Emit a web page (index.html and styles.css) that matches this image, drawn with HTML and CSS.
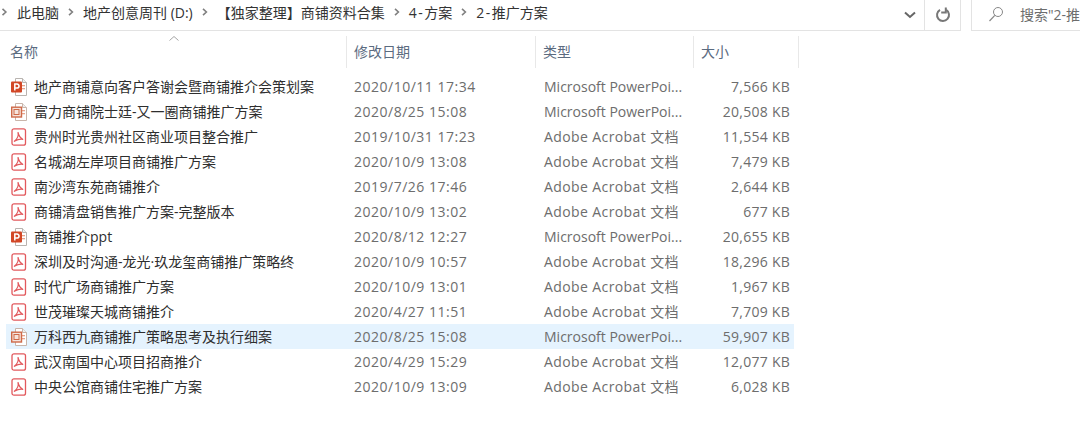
FILE: index.html
```html
<!DOCTYPE html>
<html lang="zh">
<head>
<meta charset="utf-8">
<title>2-推广方案</title>
<link rel="stylesheet" href="styles.css">
</head>
<body>
<svg class="defs" width="0" height="0" aria-hidden="true">
  <symbol id="ppt" viewBox="0 0 16 18">
    <path d="M4.500.5h7l4 4v13h-11z" fill="#fff" stroke="#b9b4b0"/>
    <path d="M11.500.5v4h4" fill="#eee" stroke="#b9b4b0"/>
    <rect x="11" y="7" width="3" height="1.300" fill="#e8a48c"/>
    <rect x="11" y="10" width="3" height="1.300" fill="#e8a48c"/>
    <rect x="0" y="3.500" width="11" height="11" rx="1" fill="#d24726"/>
    <path d="M3.800 12.500V6h2.200a2 2 0 0 1 0 4.100H3.800" fill="none" stroke="#fff" stroke-width="1.500"/>
  </symbol>
  <symbol id="pptl" viewBox="0 0 16 18">
    <path d="M4.500.5h7l4 4v13h-11z" fill="#fff" stroke="#c9b5aa"/>
    <path d="M11.500.5v4h4" fill="#eee" stroke="#c9b5aa"/>
    <rect x="11" y="7" width="3" height="1.300" fill="#e8a48c"/>
    <rect x="11" y="10" width="3" height="1.300" fill="#e8a48c"/>
    <rect x=".7" y="4.200" width="9.800" height="9.800" fill="#f6e4dc" stroke="#cf6a49" stroke-width="1.400"/>
    <rect x="3" y="6.500" width="5" height="5" fill="none" stroke="#cf6a49"/>
  </symbol>
  <symbol id="pdf" viewBox="0 0 16 18">
    <rect x="1" y=".8" width="13.500" height="16.400" rx="2" fill="#fff" stroke="#e2595d" stroke-width="1.300"/>
    <path d="M7 4.500c.8 3-1 6.500-3.600 8.800 2.800-1.600 5.800-2.400 8.300-2-2.300-1.200-3.900-3.500-4.700-6.800z" fill="none" stroke="#e2595d" stroke-width="1.200" stroke-linejoin="round"/>
  </symbol>
  <symbol id="chevr" viewBox="0 0 6 8">
    <path d="M1 .8L4.400 4 1 7.200" fill="none" stroke="#808080" stroke-width="1.600"/>
  </symbol>
</svg>

<header class="topbar">
  <nav class="crumbs">
    <svg class="sep first"><use href="#chevr"/></svg><span>此电脑</span>
    <svg class="sep"><use href="#chevr"/></svg><span>地产创意周刊 (D:)</span>
    <svg class="sep"><use href="#chevr"/></svg><span>【独家整理】商铺资料合集</span>
    <svg class="sep"><use href="#chevr"/></svg><span><span class="wide">4-</span>方案</span>
    <svg class="sep"><use href="#chevr"/></svg><span><span class="wide">2-</span>推广方案</span>
  </nav>
  <div class="chev">
    <svg width="14" height="10" viewBox="0 0 14 10"><path d="M2 2.500l5 4.500 5-4.500" fill="none" stroke="#666" stroke-width="2"/></svg>
  </div>
  <div class="refresh">
    <svg width="16" height="16" viewBox="0 0 16 16"><path d="M5 2.800a6 6 0 1 0 6.200.1" fill="none" stroke="#777" stroke-width="2"/><path d="M10.800 .6v4.800h-4.600" fill="none" stroke="#777" stroke-width="2"/></svg>
  </div>
  <div class="search">
    <svg class="lens" viewBox="0 0 16 16"><circle cx="10" cy="6" r="4.500" fill="none" stroke="#888"/><path d="M6.800 9.300L1.500 15" stroke="#888" stroke-width="1.200"/></svg>
    <span>搜索"2-推</span>
  </div>
</header>

<main class="list">
  <div class="head">
    <div class="hname">名称<span class="caret"><svg width="10" height="5" viewBox="0 0 10 5"><path d="M.5 4.500L5 .5l4.500 4" fill="none" stroke="#a5a5a5"/></svg></span></div>
    <div class="hcell">修改日期</div>
    <div class="hcell">类型</div>
    <div class="hcell">大小</div>
  </div>
  <div class="rows">
    <div class="row"><svg class="ico"><use href="#ppt"/></svg><span class="name">地产商铺意向客户答谢会暨商铺推介会策划案</span><span class="meta date">2020/10/11 17:34</span><span class="meta">Microsoft PowerPoi...</span><span class="meta size">7,566 KB</span></div>
    <div class="row"><svg class="ico"><use href="#pptl"/></svg><span class="name">富力商铺院士廷-又一圈商铺推广方案</span><span class="meta date">2020/8/25 15:08</span><span class="meta">Microsoft PowerPoi...</span><span class="meta size">20,508 KB</span></div>
    <div class="row"><svg class="ico"><use href="#pdf"/></svg><span class="name">贵州时光贵州社区商业项目整合推广</span><span class="meta date">2019/10/31 17:23</span><span class="meta adobe">Adobe Acrobat 文档</span><span class="meta size">11,554 KB</span></div>
    <div class="row"><svg class="ico"><use href="#pdf"/></svg><span class="name">名城湖左岸项目商铺推广方案</span><span class="meta date">2020/10/9 13:08</span><span class="meta adobe">Adobe Acrobat 文档</span><span class="meta size">7,479 KB</span></div>
    <div class="row"><svg class="ico"><use href="#pdf"/></svg><span class="name">南沙湾东苑商铺推介</span><span class="meta date">2019/7/26 17:46</span><span class="meta adobe">Adobe Acrobat 文档</span><span class="meta size">2,644 KB</span></div>
    <div class="row"><svg class="ico"><use href="#pdf"/></svg><span class="name">商铺清盘销售推广方案-完整版本</span><span class="meta date">2020/10/9 13:02</span><span class="meta adobe">Adobe Acrobat 文档</span><span class="meta size">677 KB</span></div>
    <div class="row"><svg class="ico"><use href="#ppt"/></svg><span class="name">商铺推介ppt</span><span class="meta date">2020/8/12 12:27</span><span class="meta">Microsoft PowerPoi...</span><span class="meta size">20,655 KB</span></div>
    <div class="row"><svg class="ico"><use href="#pdf"/></svg><span class="name">深圳及时沟通-龙光·玖龙玺商铺推广策略终</span><span class="meta date">2020/10/9 10:57</span><span class="meta adobe">Adobe Acrobat 文档</span><span class="meta size">18,296 KB</span></div>
    <div class="row"><svg class="ico"><use href="#pdf"/></svg><span class="name">时代广场商铺推广方案</span><span class="meta date">2020/10/9 13:01</span><span class="meta adobe">Adobe Acrobat 文档</span><span class="meta size">1,967 KB</span></div>
    <div class="row"><svg class="ico"><use href="#pdf"/></svg><span class="name">世茂璀璨天城商铺推介</span><span class="meta date">2020/4/27 11:51</span><span class="meta adobe">Adobe Acrobat 文档</span><span class="meta size">7,709 KB</span></div>
    <div class="row selected"><svg class="ico"><use href="#pptl"/></svg><span class="name">万科西九商铺推广策略思考及执行细案</span><span class="meta date">2020/8/25 15:08</span><span class="meta">Microsoft PowerPoi...</span><span class="meta size">59,907 KB</span></div>
    <div class="row"><svg class="ico"><use href="#pdf"/></svg><span class="name">武汉南国中心项目招商推介</span><span class="meta date">2020/4/29 15:29</span><span class="meta adobe">Adobe Acrobat 文档</span><span class="meta size">12,077 KB</span></div>
    <div class="row"><svg class="ico"><use href="#pdf"/></svg><span class="name">中央公馆商铺住宅推广方案</span><span class="meta date">2020/10/9 13:09</span><span class="meta adobe">Adobe Acrobat 文档</span><span class="meta size">6,028 KB</span></div>
  </div>
</main>
</body>
</html>
```
FILE: styles.css
```css
* { box-sizing: border-box; }
html, body { margin: 0; padding: 0; height: 100%; overflow: hidden; }
body {
  background: #fff;
  color: #2e2e2e;
  font-family: "Open Sans", "Noto Sans CJK SC", sans-serif;
  font-size: 14px;
}
.defs { display: block; height: 0; }

.topbar {
  display: flex;
  height: 31px;
  align-items: stretch;
  overflow: hidden;
}
.crumbs {
  display: flex;
  align-items: center;
  flex: 0 0 892px;
  border-bottom: 1px solid #e3e3e3;
  white-space: nowrap;
  color: #333;
  padding-bottom: 6px;
}
.wide { letter-spacing: 1.5px; }
.sep {
  width: 24px;
  height: 8px;
  flex: none;
}
.sep.first { width: 17px; margin-left: -4px; margin-right: 4px; }
.chev {
  flex: 0 0 33px;
  display: flex;
  align-items: center;
  justify-content: center;
  padding-left: 4px;
  border-bottom: 1px solid #e3e3e3;
  border-right: 1px solid #e3e3e3;
}
.refresh {
  flex: 0 0 36px;
  display: flex;
  align-items: center;
  justify-content: center;
  border-bottom: 1px solid #e3e3e3;
  border-right: 1px solid #e3e3e3;
}
.search {
  flex: 1;
  margin-left: 10px;
  display: flex;
  align-items: center;
  gap: 16px;
  padding-left: 16px;
  padding-bottom: 3px;
  color: #6d6d6d;
  white-space: nowrap;
  border-left: 1px solid #e3e3e3;
  border-bottom: 1px solid #e3e3e3;
}
.lens { width: 16px; height: 16px; flex: none; }

.list { padding: 5px 0 0 6px; }
.head {
  display: grid;
  grid-template-columns: 341px 189px 158px 105px;
  height: 32px;
  color: #5b6b7f;
}
.hname, .hcell {
  display: flex;
  align-items: center;
  border-right: 1px solid #e8e8e8;
  position: relative;
  padding-bottom: 3px;
}
.hname { padding-left: 4px; }
.hcell { padding-left: 7px; }
.caret { position: absolute; left: 163px; top: 0; line-height: 0; }

.rows { margin-top: 6px; width: 788px; }
.row {
  display: grid;
  grid-template-columns: 28px 320px 190px 163px 83px;
  height: 25px;
  align-items: center;
  white-space: nowrap;
}
.selected { background: #e5f3fe; }
.ico { width: 16px; height: 18px; margin-left: 5px; }
.name { color: #2e2e2e; }
.name, .meta { line-height: 25px; }
.meta { color: #6d6d6d; }
.date { letter-spacing: .5px; }
.adobe { letter-spacing: .4px; }
.size { text-align: right; letter-spacing: .25px; }
```
